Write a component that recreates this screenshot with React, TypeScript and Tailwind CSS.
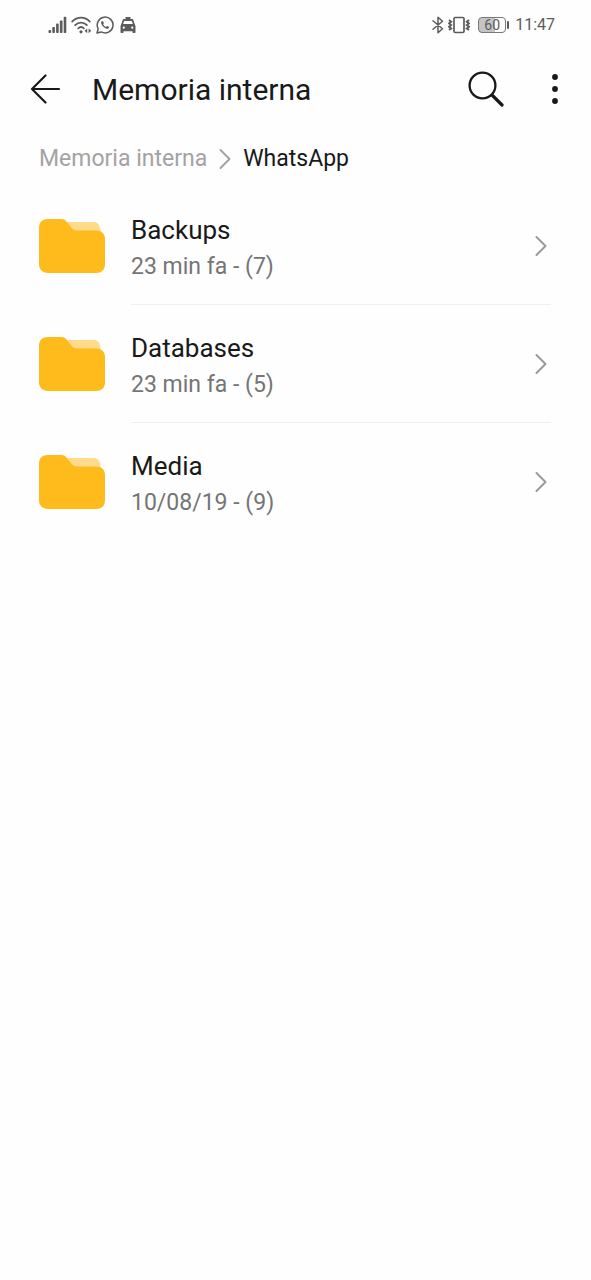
import React from 'react';

interface Folder {
  name: string;
  modified: string;
  count: number;
}

const folders: Folder[] = [
  { name: 'Backups', modified: '23 min fa', count: 7 },
  { name: 'Databases', modified: '23 min fa', count: 5 },
  { name: 'Media', modified: '10/08/19', count: 9 },
];

const SignalIcon = () => (
  <svg width="19" height="18" viewBox="0 0 19 18" fill="currentColor" aria-hidden="true">
    <rect x="0.5" y="14" width="2.6" height="3" rx="0.8" />
    <rect x="4.3" y="11" width="2.6" height="6" rx="0.8" />
    <rect x="8.1" y="7.5" width="2.6" height="9.5" rx="0.8" />
    <rect x="11.9" y="4.5" width="2.6" height="12.5" rx="0.8" />
    <rect x="15.7" y="0.8" width="2.6" height="16.2" rx="0.8" />
  </svg>
);

const WifiIcon = () => (
  <svg width="21" height="18" viewBox="0 0 21 18" fill="none" stroke="currentColor" strokeLinecap="round" aria-hidden="true">
    <path d="M1.2 5.6c5-5.2 12.6-5.2 17.6 0" strokeWidth="1.8" />
    <path d="M4.2 9.2c3.3-3.5 8.4-3.5 11.7 0" strokeWidth="1.8" />
    <path d="M7.2 12.4c1.7-1.7 4-1.7 5.7 0" strokeWidth="1.8" />
    <circle cx="10" cy="15.8" r="1.6" fill="currentColor" stroke="none" />
    <path d="M13.6 14.8l2.6-2.4v4.8zM20.2 14.8l-2.6-2.4v4.8z" fill="currentColor" stroke="none" />
  </svg>
);

const WhatsAppIcon = () => (
  <svg width="18" height="18" viewBox="0 0 18 18" fill="none" stroke="currentColor" aria-hidden="true">
    <path d="M1 17l1.2-4.2A7.9 7.9 0 1 1 5.3 15.9z" strokeWidth="1.5" strokeLinejoin="round" />
    <path
      d="M6.3 4.9c-.6.1-1.3.8-1.2 1.9.3 2.6 3.2 5.6 6 6 1 .1 2-.5 2.1-1.5 0-.4-1.9-1.4-2.2-1.2l-.9 1c-1.3-.5-2.4-1.6-3-2.8l.7-.9c.2-.4-.7-2.5-1.5-2.5z"
      fill="currentColor"
      stroke="none"
    />
  </svg>
);

const TaxiIcon = () => (
  <svg width="16" height="18" viewBox="0 0 16 18" aria-hidden="true">
    <path
      d="M5.5 1h5v2h1.6c.6 0 1 .3 1.2.9l1.9 5.3c.2.4.3.7.3 1.2V16c0 .6-.4 1-1 1h-1c-.6 0-1-.4-1-1v-.8h-9v.8c0 .6-.4 1-1 1h-1c-.6 0-1-.4-1-1v-5.6c0-.5.1-.8.3-1.2l1.9-5.3c.2-.6.6-.9 1.2-.9h1.6z"
      fill="currentColor"
    />
    <path d="M4.2 4.9h7.6l1.1 3.2H3.1z" fill="#fff" />
    <circle cx="3.8" cy="11.7" r="1.1" fill="#fff" />
    <circle cx="12.2" cy="11.7" r="1.1" fill="#fff" />
  </svg>
);

const BluetoothIcon = () => (
  <svg width="12" height="18" viewBox="0 0 12 18" fill="none" stroke="currentColor" strokeWidth="1.5" aria-hidden="true">
    <path d="M1 4.8l9.5 8L6 16.8V1.2l4.5 4L1 13.2" strokeLinejoin="round" strokeLinecap="round" />
  </svg>
);

const VibrateIcon = () => (
  <svg width="22" height="18" viewBox="0 0 22 18" fill="none" stroke="currentColor" aria-hidden="true">
    <rect x="6" y="1.5" width="10" height="15" rx="1.2" strokeWidth="1.7" />
    <path d="M1 4l2.2 1.7L1 7.4l2.2 1.7L1 10.8l2.2 1.7L1 14" strokeWidth="1.9" />
    <path d="M21 4l-2.2 1.7L21 7.4l-2.2 1.7 2.2 1.7-2.2 1.7L21 14" strokeWidth="1.9" />
  </svg>
);

const BackIcon = () => (
  <svg width="31" height="32" viewBox="0 0 31 32" fill="none" stroke="currentColor" strokeWidth="2.2" strokeLinecap="round" strokeLinejoin="round" aria-hidden="true">
    <path d="M15.5 1.5L2 15l13.5 13.5M2 15h27" />
  </svg>
);

const SearchIcon = () => (
  <svg width="36" height="38" viewBox="0 0 36 38" fill="none" stroke="currentColor" strokeLinecap="round" aria-hidden="true">
    <circle cx="14.5" cy="14.5" r="12.9" strokeWidth="2.3" />
    <path d="M24.5 24.5l9.5 9.5" strokeWidth="3.2" />
  </svg>
);

const MoreIcon = () => (
  <svg width="6" height="34" viewBox="0 0 6 34" fill="currentColor" aria-hidden="true">
    <circle cx="3" cy="4" r="2.9" />
    <circle cx="3" cy="16" r="2.9" />
    <circle cx="3" cy="28" r="2.9" />
  </svg>
);

const ChevronIcon = () => (
  <svg width="12" height="22" viewBox="0 0 12 22" fill="none" stroke="currentColor" strokeWidth="2" strokeLinecap="round" strokeLinejoin="round" aria-hidden="true">
    <path d="M1.5 2l9 9-9 9" />
  </svg>
);

const FolderIcon = () => (
  <svg className="shrink-0" width="66" height="56" viewBox="0 0 66 56" aria-hidden="true">
    <path d="M20 4h34.5c4 0 6 2.5 6.8 6.5L62 20H26z" fill="#ffdb8b" />
    <path
      d="M9 1h13.5c2 0 3.4.8 4.7 2.2l6 7.4c1.2 1.3 2.6 2 4.6 2H57c5.5 0 9 3.4 9 8.4v25c0 6-3.5 9-9 9H9c-5.5 0-9-3.5-9-9V10c0-6 3.5-9 9-9z"
      fill="#ffba1c"
    />
  </svg>
);

const StatusBar = () => (
  <div className="flex h-[50px] items-center justify-between pr-9 pl-12 text-[#5c5c5c]">
    <div className="flex items-center gap-1">
      <SignalIcon />
      <WifiIcon />
      <WhatsAppIcon />
      <span className="pl-[2px]">
        <TaxiIcon />
      </span>
    </div>
    <div className="flex items-center">
      <BluetoothIcon />
      <span className="pr-2 pl-1">
        <VibrateIcon />
      </span>
      <div className="flex items-center gap-px">
        <span className="flex h-4 w-7 items-center justify-center rounded-sm border border-[#777] bg-linear-to-r from-[#c4c4c4] from-60% to-white to-60% text-[14px] leading-none">
          60
        </span>
        <span className="h-2 w-[2px] rounded-sm bg-[#5c5c5c]" />
      </div>
      <time className="pl-[6px] text-[16px] leading-6">11:47</time>
    </div>
  </div>
);

const Header = () => (
  <header className="flex h-20 items-center pr-[29px] pl-[30px] text-[#191919]">
    <button type="button" aria-label="Indietro">
      <BackIcon />
    </button>
    <h1 className="flex-1 pl-[31px] text-[30px] leading-10">Memoria interna</h1>
    <button type="button" aria-label="Cerca">
      <SearchIcon />
    </button>
    <button type="button" aria-label="Altro" className="pr-1 pl-12">
      <MoreIcon />
    </button>
  </header>
);

const Breadcrumb = () => (
  <nav className="flex h-[57px] items-center gap-3 px-[39px] text-[23px] leading-8">
    <a href="#" className="text-[#a3a3a3]">
      Memoria interna
    </a>
    <span className="text-[#a3a3a3]">
      <ChevronIcon />
    </span>
    <span className="text-[#191919]">WhatsApp</span>
  </nav>
);

const FolderRow = ({ folder }: { folder: Folder }) => (
  <li className="group">
    <a href="#" className="flex h-[118px] items-center gap-[26px] pr-10 pl-[39px]">
      <FolderIcon />
      <div className="flex h-full flex-1 items-center justify-between border-b border-[#f0f0f0] pr-1 group-last:border-transparent">
        <div className="pt-[6px]">
          <p className="text-[26px] leading-9 text-[#191919]">{folder.name}</p>
          <p className="text-[23px] leading-[38px] text-[#757575]">
            {folder.modified} - ({folder.count})
          </p>
        </div>
        <span className="text-[#999]">
          <ChevronIcon />
        </span>
      </div>
    </a>
  </li>
);

const App = () => {
  return (
    <div className="min-h-screen bg-[#fefefe] font-['Roboto','Liberation_Sans',sans-serif]">
      <StatusBar />
      <Header />
      <Breadcrumb />
      <main>
        <ul>
          {folders.map((folder) => (
            <FolderRow key={folder.name} folder={folder} />
          ))}
        </ul>
      </main>
    </div>
  );
};

export default App;
